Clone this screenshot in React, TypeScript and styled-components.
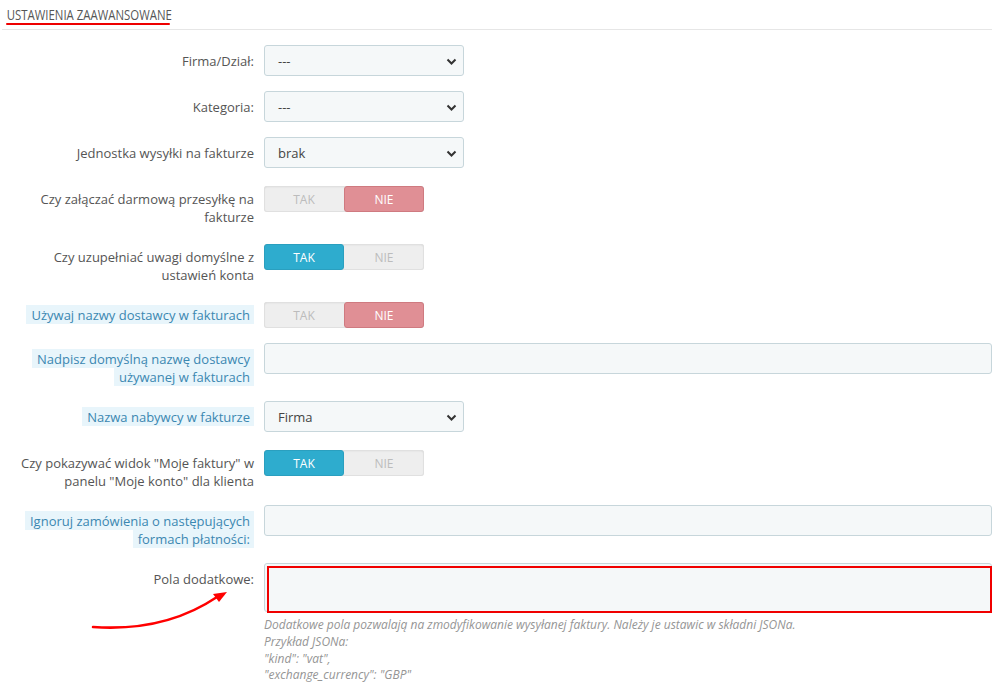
import React from "react";
import styled, { createGlobalStyle } from "styled-components";

const Global = createGlobalStyle`
  html, body { margin: 0; padding: 0; background: #fff; }
  body { font-family: "Open Sans", "DejaVu Sans", sans-serif; }
  * { box-sizing: border-box; }
`;

const Page = styled.div`
  position: relative;
  width: 999px;
  min-height: 684px;
  padding: 0 7px 0 2px;
  background: #fff;
`;

const Heading = styled.div`
  padding: 6px 0 4px 4px;
  border-bottom: 1px solid #e6e6e6;
`;

const HeadingTitle = styled.div`
  font-family: "Open Sans", sans-serif;
  font-size: 15px;
  line-height: 17px;
  color: #555;
  white-space: nowrap;
  transform: scaleX(0.76);
  transform-origin: left center;
  padding-left: 1px;
`;

const HeadingUnderline = styled.div`
  width: 164px;
  height: 2px;
  border-radius: 1px;
  background: #ee0000;
`;

const Form = styled.div`
  padding-top: 15px;
`;

const FormGroup = styled.div`
  position: relative;
  display: grid;
  grid-template-columns: 252px 1fr;
  column-gap: 10px;
  align-items: start;
  margin-bottom: 15px;
`;

const Label = styled.div`
  padding: 7px 0 0 10px;
  text-align: right;
  font-size: 13px;
  line-height: 18px;
  color: #555;
`;

const Hint = styled.span`
  background: #e8f5fb;
  color: #3b87b1;
  padding: 1px 4px 0 5px;
  -webkit-box-decoration-break: clone;
  box-decoration-break: clone;
`;

const SelectBox = styled.div`
  position: relative;
  width: 200px;
  height: 31px;
  padding: 0 13px;
  display: flex;
  align-items: center;
  background: #f5f8f9;
  border: 1px solid #c7d6db;
  border-radius: 3px;
  font-size: 13px;
  color: #444;
`;

const Chevron = styled.svg`
  position: absolute;
  right: 6px;
  top: 12px;
`;

const TextInput = styled.div<{ $h?: number }>`
  position: relative;
  height: ${(p) => p.$h ?? 31}px;
  background: #f5f8f9;
  border: 1px solid #c7d6db;
  border-radius: 3px;
`;

const Mark = styled.div`
  position: absolute;
  left: 2px;
  top: 2px;
  right: -1px;
  bottom: -2px;
  border: 2px solid #f00000;
`;

const Switch = styled.div`
  margin-top: 3px;
  display: flex;
  width: 160px;
  height: 26px;
  border-radius: 3px;
  background: #eee;
  box-shadow: inset 0 0 0 1px #e0e0e0, inset 0 1px 2px rgba(0, 0, 0, 0.1);
`;

const SwitchOption = styled.div<{ $on?: "yes" | "no" }>`
  flex: 0 0 80px;
  display: flex;
  align-items: center;
  justify-content: center;
  font-size: 12px;
  border-radius: 3px;
  color: ${(p) => (p.$on ? "#fff" : "#bcbcbc")};
  background: ${(p) =>
    p.$on === "yes" ? "#2eacce" : p.$on === "no" ? "#e08f95" : "transparent"};
  border: 1px solid
    ${(p) =>
      p.$on === "yes" ? "#2a9fbf" : p.$on === "no" ? "#cf7a80" : "transparent"};
`;

const Help = styled.div`
  margin-top: 5px;
  font-size: 12px;
  line-height: 16.8px;
  font-style: italic;
  color: #959595;
`;

const Arrow = styled.svg`
  position: absolute;
  left: 85px;
  top: 582px;
  overflow: visible;
`;

const Select = ({ value }: { value: string }) => (
  <SelectBox>
    {value}
    <Chevron width="11" height="8" viewBox="0 0 11 8">
      <path d="M1.5 1.5 L5.5 5.5 L9.5 1.5" fill="none" stroke="#333" strokeWidth="2" />
    </Chevron>
  </SelectBox>
);

const Toggle = ({ yes }: { yes: boolean }) => (
  <Switch>
    <SwitchOption $on={yes ? "yes" : undefined}>TAK</SwitchOption>
    <SwitchOption $on={yes ? undefined : "no"}>NIE</SwitchOption>
  </Switch>
);

export default function App() {
  return (
    <Page>
      <Global />
      <Heading>
        <HeadingTitle>USTAWIENIA ZAAWANSOWANE</HeadingTitle>
        <HeadingUnderline />
      </Heading>
      <Form>
        <FormGroup>
          <Label>Firma/Dział:</Label>
          <Select value="---" />
        </FormGroup>
        <FormGroup>
          <Label>Kategoria:</Label>
          <Select value="---" />
        </FormGroup>
        <FormGroup>
          <Label>Jednostka wysyłki na fakturze</Label>
          <Select value="brak" />
        </FormGroup>
        <FormGroup>
          <Label>Czy załączać darmową przesyłkę na fakturze</Label>
          <Toggle yes={false} />
        </FormGroup>
        <FormGroup>
          <Label>Czy uzupełniać uwagi domyślne z ustawień konta</Label>
          <Toggle yes={true} />
        </FormGroup>
        <FormGroup>
          <Label>
            <Hint>Używaj nazwy dostawcy w fakturach</Hint>
          </Label>
          <Toggle yes={false} />
        </FormGroup>
        <FormGroup>
          <Label>
            <Hint>Nadpisz domyślną nazwę dostawcy używanej w fakturach</Hint>
          </Label>
          <TextInput />
        </FormGroup>
        <FormGroup>
          <Label>
            <Hint>Nazwa nabywcy w fakturze</Hint>
          </Label>
          <Select value="Firma" />
        </FormGroup>
        <FormGroup>
          <Label>Czy pokazywać widok "Moje faktury" w panelu "Moje konto" dla klienta</Label>
          <Toggle yes={true} />
        </FormGroup>
        <FormGroup>
          <Label>
            <Hint>Ignoruj zamówienia o następujących formach płatności:</Hint>
          </Label>
          <TextInput />
        </FormGroup>
        <FormGroup>
          <Label>Pola dodatkowe:</Label>
          <div>
            <TextInput $h={49}>
              <Mark />
            </TextInput>
            <Help>
              Dodatkowe pola pozwalają na zmodyfikowanie wysyłanej faktury. Należy je ustawic w składni JSONa.
              <br />
              Przykład JSONa:
              <br />
              "kind": "vat",
              <br />
              "exchange_currency": "GBP"
            </Help>
          </div>
        </FormGroup>
      </Form>
      <Arrow width="150" height="50" viewBox="0 0 150 50">
        <path d="M8 45 Q 80 50 132 15" fill="none" stroke="#f00" strokeWidth="2.5" strokeLinecap="round" />
        <path d="M142 10 L128 12 L134 20 Z" fill="#f00" />
      </Arrow>
    </Page>
  );
}
